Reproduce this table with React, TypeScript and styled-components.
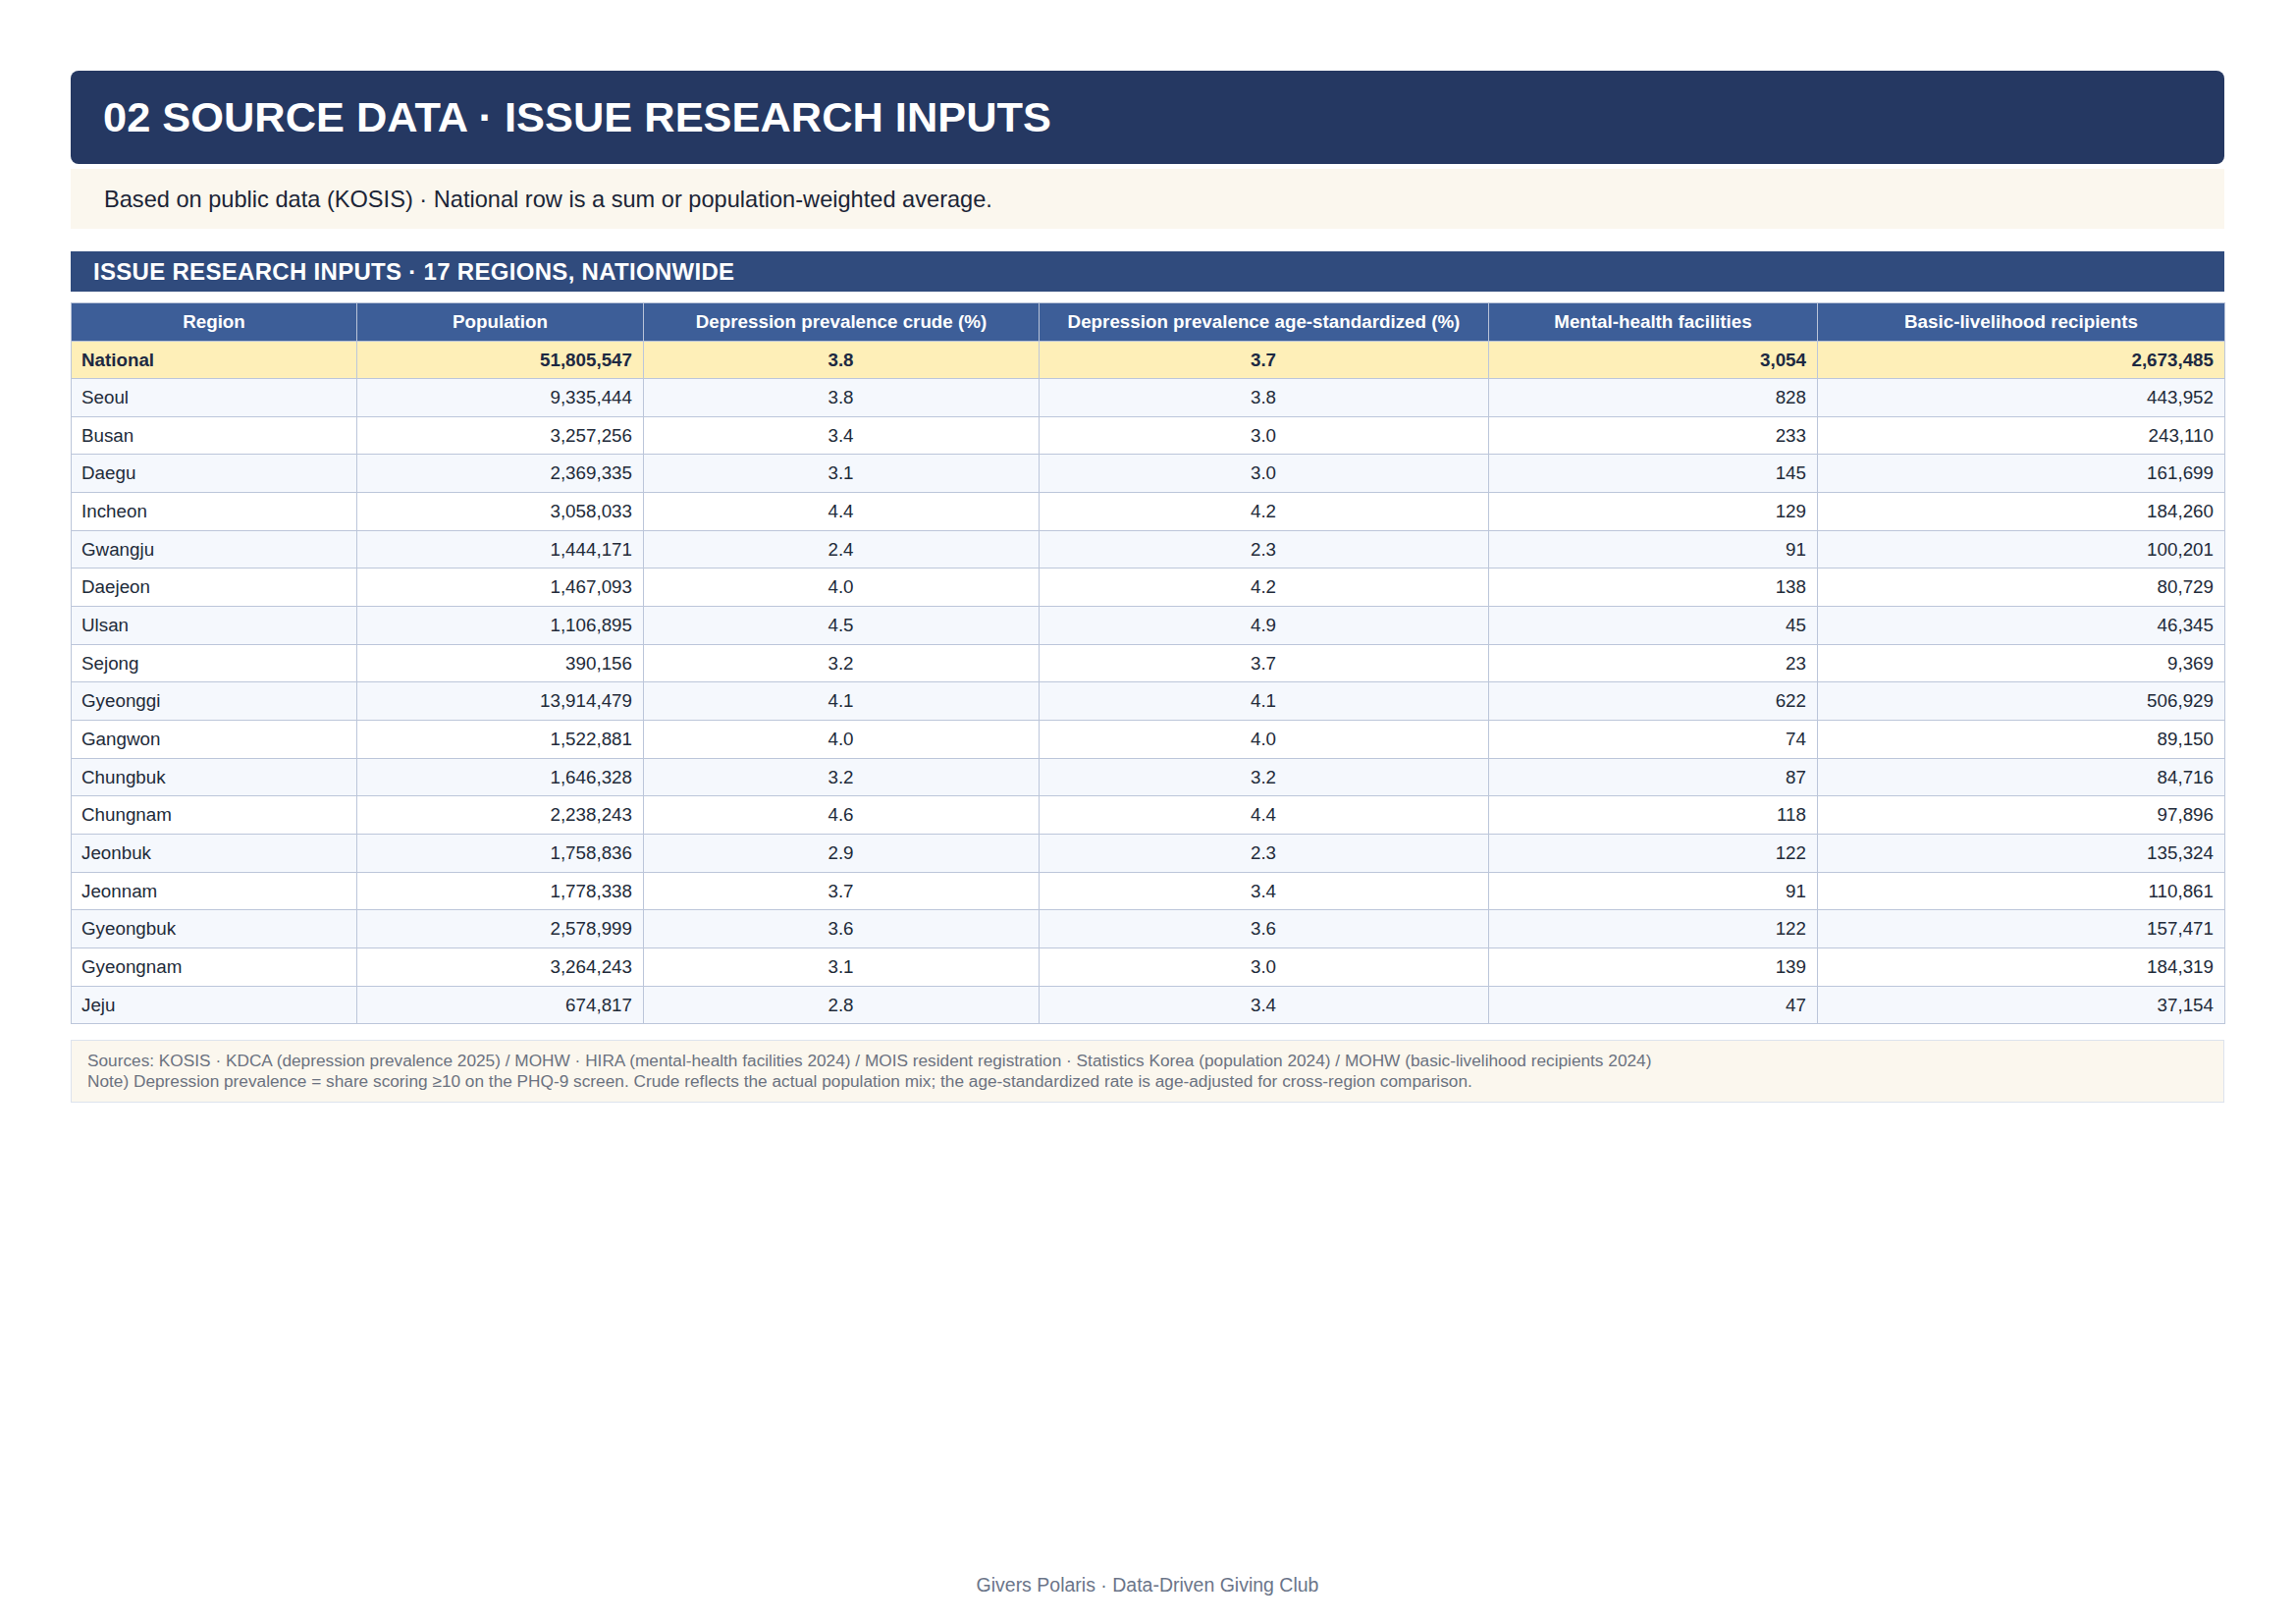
import * as React from 'react';
import styled, { createGlobalStyle } from 'styled-components';

const GlobalStyle = createGlobalStyle`
    html, body {
        margin: 0;
        padding: 0;
        background: #ffffff;
    }
    body {
        font-family: "Liberation Sans", Arial, sans-serif;
        color: #1f2937;
    }
    * {
        box-sizing: border-box;
    }
`;

const Page = styled.div`
    min-height: 1654px;
    padding: 72px 73px 0 72px;
    display: flex;
    flex-direction: column;
`;

const TitleBar = styled.header`
    background: #253862;
    border-radius: 8px;
    padding: 22px 33px;
    margin-bottom: 5px;
`;

const Title = styled.h1`
    margin: 0;
    color: #ffffff;
    font-size: 43.4px;
    line-height: 51px;
    font-weight: 700;
`;

const Lead = styled.div`
    background: #fbf7ee;
    padding: 17px 34px 15px;
    font-size: 23.6px;
    line-height: 29px;
    color: #1c2536;
    margin-bottom: 23px;
`;

const SectionBar = styled.h2`
    margin: 0 0 11px 0;
    background: #304b7d;
    color: #ffffff;
    font-size: 24px;
    letter-spacing: 0.3px;
    line-height: 29px;
    font-weight: 700;
    padding: 6px 23px;
`;

const Table = styled.table`
    width: 100%;
    border-collapse: collapse;
    table-layout: fixed;
    font-size: 19px;
`;

const Col = styled.col<{ $w: number }>`
    width: ${p => p.$w}px;
`;

type Align = 'left' | 'center' | 'right';

const HeadCell = styled.th`
    background: #3d5e98;
    color: #ffffff;
    font-weight: 700;
    font-size: 18.8px;
    line-height: 21px;
    text-align: center;
    padding: 8px 10px 8.5px;
    border: 1px solid #b9c3d8;
`;

const Row = styled.tr<{ $total?: boolean }>`
    background: ${p => (p.$total ? '#feefb8' : '#ffffff')};
    &:nth-child(even) {
        background: ${p => (p.$total ? '#feefb8' : '#f5f8fd')};
    }
`;

const Cell = styled.td<{ $align: Align; $bold?: boolean }>`
    text-align: ${p => p.$align};
    font-weight: ${p => (p.$bold ? 700 : 400)};
    color: ${p => (p.$bold ? '#1d2942' : '#222b3a')};
    font-size: 18.8px;
    line-height: 21px;
    padding: 8px 11px 8.67px 10px;
    border: 1px solid #bcc6da;
`;

const Notes = styled.div`
    margin-top: 16px;
    background: #fbf7ee;
    border: 1px solid #dde3ed;
    padding: 10px 16px 10px;
    font-size: 17.25px;
    line-height: 21px;
    color: #6b7280;
`;

const Footer = styled.footer`
    margin-top: auto;
    padding-bottom: 29px;
    text-align: center;
    font-size: 19.5px;
    line-height: 22px;
    color: #6b7589;
`;

const columns: { label: string; width: number; align: Align }[] = [
    { label: 'Region', width: 291, align: 'left' },
    { label: 'Population', width: 292, align: 'right' },
    { label: 'Depression prevalence crude (%)', width: 403, align: 'center' },
    { label: 'Depression prevalence age-standardized (%)', width: 458, align: 'center' },
    { label: 'Mental-health facilities', width: 335, align: 'right' },
    { label: 'Basic-livelihood recipients', width: 415, align: 'right' },
];

const national = ['National', '51,805,547', '3.8', '3.7', '3,054', '2,673,485'];

const regions: string[][] = [
    ['Seoul', '9,335,444', '3.8', '3.8', '828', '443,952'],
    ['Busan', '3,257,256', '3.4', '3.0', '233', '243,110'],
    ['Daegu', '2,369,335', '3.1', '3.0', '145', '161,699'],
    ['Incheon', '3,058,033', '4.4', '4.2', '129', '184,260'],
    ['Gwangju', '1,444,171', '2.4', '2.3', '91', '100,201'],
    ['Daejeon', '1,467,093', '4.0', '4.2', '138', '80,729'],
    ['Ulsan', '1,106,895', '4.5', '4.9', '45', '46,345'],
    ['Sejong', '390,156', '3.2', '3.7', '23', '9,369'],
    ['Gyeonggi', '13,914,479', '4.1', '4.1', '622', '506,929'],
    ['Gangwon', '1,522,881', '4.0', '4.0', '74', '89,150'],
    ['Chungbuk', '1,646,328', '3.2', '3.2', '87', '84,716'],
    ['Chungnam', '2,238,243', '4.6', '4.4', '118', '97,896'],
    ['Jeonbuk', '1,758,836', '2.9', '2.3', '122', '135,324'],
    ['Jeonnam', '1,778,338', '3.7', '3.4', '91', '110,861'],
    ['Gyeongbuk', '2,578,999', '3.6', '3.6', '122', '157,471'],
    ['Gyeongnam', '3,264,243', '3.1', '3.0', '139', '184,319'],
    ['Jeju', '674,817', '2.8', '3.4', '47', '37,154'],
];

export default function App() {
    return <>
        <GlobalStyle />
        <Page>
            <TitleBar>
                <Title>02 SOURCE DATA · ISSUE RESEARCH INPUTS</Title>
            </TitleBar>
            <Lead>Based on public data (KOSIS) · National row is a sum or population-weighted average.</Lead>
            <SectionBar>ISSUE RESEARCH INPUTS · 17 REGIONS, NATIONWIDE</SectionBar>
            <Table>
                <colgroup>
                    {columns.map(c => <Col key={c.label} $w={c.width} />)}
                </colgroup>
                <thead>
                    <tr>
                        {columns.map(c => <HeadCell key={c.label}>{c.label}</HeadCell>)}
                    </tr>
                </thead>
                <tbody>
                    <Row $total>
                        {national.map((v, i) => <Cell key={i} $align={columns[i].align} $bold>{v}</Cell>)}
                    </Row>
                    {regions.map(r => (
                        <Row key={r[0]}>
                            {r.map((v, i) => <Cell key={i} $align={columns[i].align}>{v}</Cell>)}
                        </Row>
                    ))}
                </tbody>
            </Table>
            <Notes>
                Sources: KOSIS · KDCA (depression prevalence 2025) / MOHW · HIRA (mental-health facilities 2024) / MOIS resident registration · Statistics Korea (population 2024) / MOHW (basic-livelihood recipients 2024)
                <br />
                Note) Depression prevalence = share scoring ≥10 on the PHQ-9 screen. Crude reflects the actual population mix; the age-standardized rate is age-adjusted for cross-region comparison.
            </Notes>
            <Footer>Givers Polaris · Data-Driven Giving Club</Footer>
        </Page>
    </>;
}
